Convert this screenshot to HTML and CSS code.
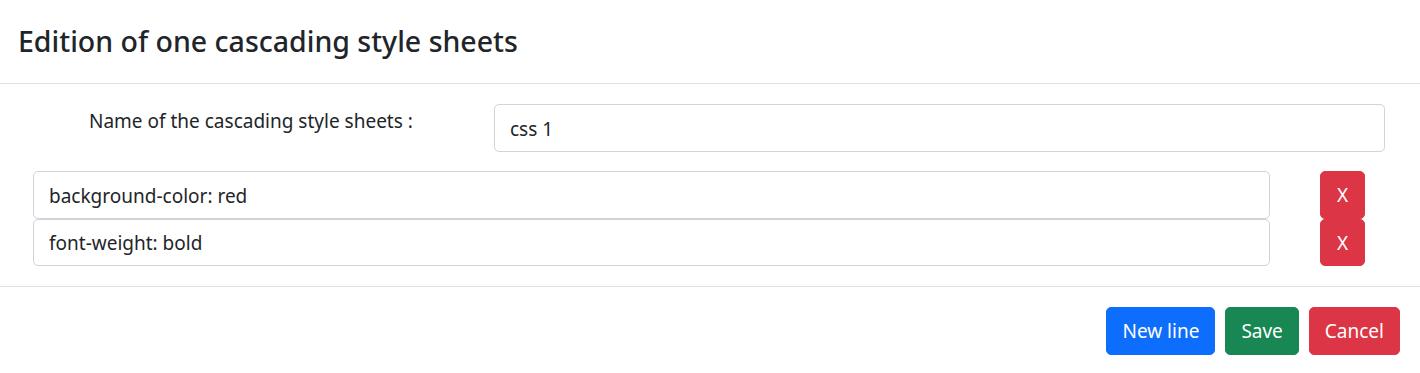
FILE: index.html
```html
<!DOCTYPE html>
<html lang="en">
<head>
<meta charset="utf-8">
<title>Edition of one cascading style sheets</title>
<link rel="stylesheet" href="styles.css">
</head>
<body>
<div class="modal">
  <header class="modal-header">
    <h5 class="modal-title">Edition of one cascading style sheets</h5>
  </header>
  <div class="modal-body">
    <div class="name-row">
      <label class="name-label" for="cssName">Name of the cascading style sheets :</label>
      <input id="cssName" class="form-control name-input" type="text" value="css 1">
    </div>
    <div class="lines">
      <div class="line">
        <input class="form-control line-input" type="text" value="background-color: red">
        <button class="btn btn-danger btn-x" type="button">X</button>
      </div>
      <div class="line">
        <input class="form-control line-input" type="text" value="font-weight: bold">
        <button class="btn btn-danger btn-x" type="button">X</button>
      </div>
    </div>
  </div>
  <footer class="modal-footer">
    <button class="btn btn-primary" type="button">New line</button>
    <button class="btn btn-success" type="button">Save</button>
    <button class="btn btn-danger" type="button">Cancel</button>
  </footer>
</div>
</body>
</html>
```

FILE: styles.css
```css
* { box-sizing: border-box; }

body {
  margin: 0;
  background: #fff;
  color: #212529;
  font-family: "Noto Sans", "Open Sans", sans-serif;
  font-size: 19px;
  line-height: 30px;
}

.modal {
  width: 1420px;
  background: #fff;
}

.modal-header {
  height: 84px;
  display: flex;
  align-items: center;
  padding: 0 20px 0 18px;
  border-bottom: 1px solid #dee2e6;
}

.modal-title {
  margin: 0;
  font-size: 28.5px;
  font-weight: 500;
  line-height: 36px;
  padding-bottom: 1px;
}

.modal-body {
  padding: 20px;
}

.name-row {
  display: grid;
  grid-template-columns: 474px 891px;
  align-items: start;
}

.name-label {
  padding-top: 2px;
  padding-left: 69px;
  line-height: 30px;
}

.form-control {
  display: block;
  height: 47.5px;
  padding: 8.5px 15px 6.5px;
  font-family: inherit;
  font-size: 19px;
  line-height: 30px;
  color: #212529;
  background: #fff;
  border: 1px solid #ced4da;
  border-radius: 5px;
  outline: none;
}

.name-input { width: 891px; }

.lines {
  margin-top: 19.5px;
  padding-left: 13px;
}

.line {
  display: flex;
  align-items: flex-start;
  gap: 50px;
}

.line-input { width: 1237px; }

.btn {
  display: inline-block;
  height: 47.5px;
  padding: 8px 15px 7px;
  font-family: inherit;
  font-size: 19px;
  line-height: 30px;
  color: #fff;
  border: 1px solid transparent;
  border-radius: 5px;
}

.btn-x { width: 45px; padding: 8px 0 7px; text-align: center; }

.btn-primary { background: #0d6efd; border-color: #0d6efd; }
.btn-success { background: #198754; border-color: #198754; }
.btn-danger { background: #dc3545; border-color: #dc3545; }

.modal-footer {
  display: flex;
  justify-content: flex-end;
  gap: 10px;
  padding: 20px;
  border-top: 1px solid #dee2e6;
}
```
